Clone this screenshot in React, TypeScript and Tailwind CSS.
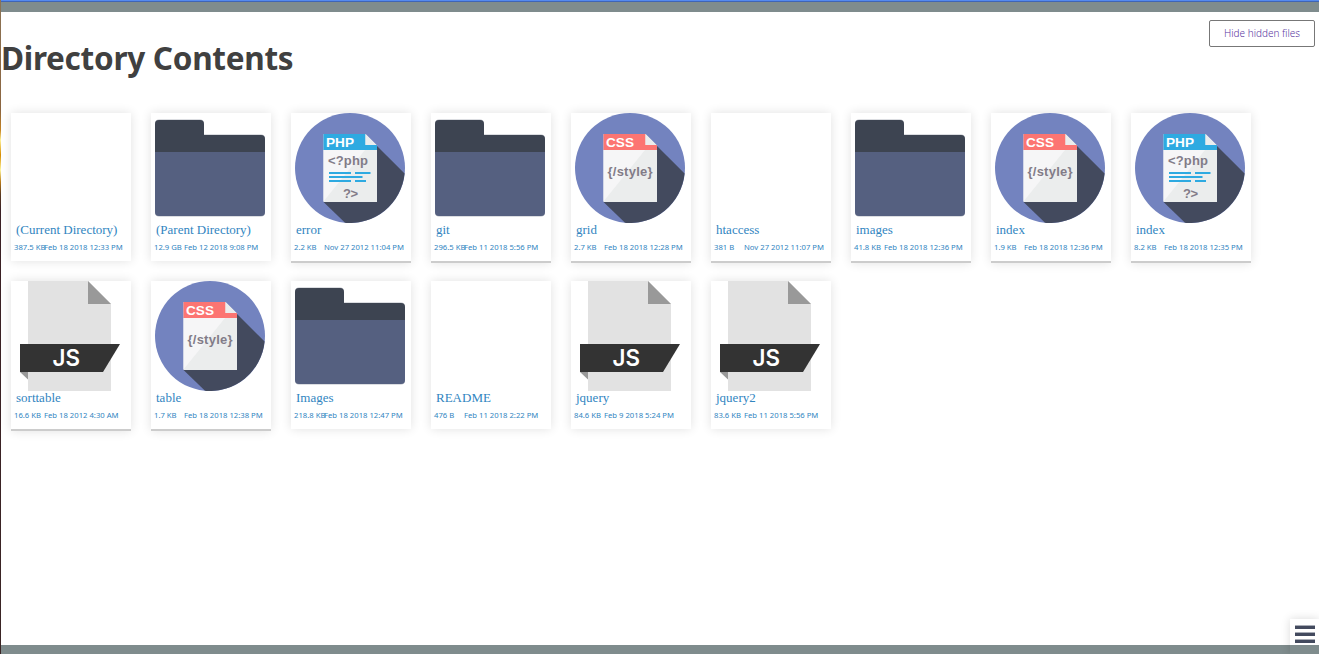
import type { ReactNode } from 'react';

type Kind = 'blank' | 'folder' | 'php' | 'css' | 'js';

interface Entry {
  name: string;
  size: string;
  date: string;
  kind: Kind;
  lined: boolean;
}

const e = (name: string, size: string, date: string, kind: Kind, lined: boolean): Entry => ({
  name, size, date, kind, lined,
});

const entries: Entry[] = [
  e('(Current Directory)', '387.5 KB', 'Feb 18 2018 12:33 PM', 'blank', false),
  e('(Parent Directory)', '12.9 GB', 'Feb 12 2018 9:08 PM', 'folder', false),
  e('error', '2.2 KB', 'Nov 27 2012 11:04 PM', 'php', true),
  e('git', '296.5 KB', 'Feb 11 2018 5:56 PM', 'folder', true),
  e('grid', '2.7 KB', 'Feb 18 2018 12:28 PM', 'css', true),
  e('htaccess', '381 B', 'Nov 27 2012 11:07 PM', 'blank', true),
  e('images', '41.8 KB', 'Feb 18 2018 12:36 PM', 'folder', true),
  e('index', '1.9 KB', 'Feb 18 2018 12:36 PM', 'css', true),
  e('index', '8.2 KB', 'Feb 18 2018 12:35 PM', 'php', true),
  e('sorttable', '16.6 KB', 'Feb 18 2012 4:30 AM', 'js', true),
  e('table', '1.7 KB', 'Feb 18 2018 12:38 PM', 'css', true),
  e('Images', '218.8 KB', 'Feb 18 2018 12:47 PM', 'folder', false),
  e('README', '476 B', 'Feb 11 2018 2:22 PM', 'blank', false),
  e('jquery', '84.6 KB', 'Feb 9 2018 5:24 PM', 'js', false),
  e('jquery2', '83.6 KB', 'Feb 11 2018 5:56 PM', 'js', false),
];

function Icon({ children }: { children?: ReactNode }) {
  return (
    <svg className="ml-1 block h-[110px] w-[110px]" viewBox="0 0 110 110" fontFamily="'Liberation Sans', Arial, sans-serif" fontWeight="bold">
      {children}
    </svg>
  );
}

function FolderIcon() {
  return (
    <Icon>
      <path d="M0 10.500a4 4 0 0 1 4-4h41a4 4 0 0 1 4 4v11h57a4 4 0 0 1 4 4V99.500a4 4 0 0 1-4 4H4a4 4 0 0 1-4-4z" fill="#b8bcc4" />
      <path d="M0 11a4 4 0 0 1 4-4h41a4 4 0 0 1 4 4v11h57a4 4 0 0 1 4 4v20H0z" fill="#3d4451" />
      <path d="M0 39h110v60a4 4 0 0 1-4 4H4a4 4 0 0 1-4-4z" fill="#556080" />
    </Icon>
  );
}

function RoundIcon({ accent, label, children }: { accent: string; label: string; children: ReactNode }) {
  return (
    <Icon>
      <circle cx="55" cy="55" r="55" fill="#7383bf" />
      <path d="M82 33L109.600 60.600A55 55 0 0 1 50 109.800L28.500 89z" fill="#434a5e" />
      <path d="M28.500 21H70.500L82 32.500V89H28.500z" fill="#ebeded" />
      <path d="M28.500 37H70L28.500 88.500z" fill="#f6f6f7" />
      <path d="M28.500 21H70.500V32H82V37H28.500z" fill={accent} />
      <path d="M70.500 21L81.500 32H70.500z" fill="#ebeded" />
      <text x="31" y="34" fontSize="13.600" fill="#fff" textLength="28">{label}</text>
      {children}
    </Icon>
  );
}

function PhpIcon() {
  return (
    <RoundIcon accent="#2eaae1" label="PHP">
      <text x="33" y="52" fontSize="13" fill="#827c88" textLength="40">&lt;?php</text>
      <path d="M34 60H56M60 60H75.500M34 64H67.500M34 68H56M60 68H71" stroke="#2eaae1" strokeWidth="2.200" />
      <text x="48" y="84.500" fontSize="13" fill="#827c88" textLength="15">?&gt;</text>
    </RoundIcon>
  );
}

function CssIcon() {
  return (
    <RoundIcon accent="#fc7572" label="CSS">
      <text x="32.500" y="63" fontSize="13" fill="#827c88" textLength="45">{'{/style}'}</text>
    </RoundIcon>
  );
}

function JsIcon() {
  return (
    <Icon>
      <path d="M13 0H73L96 23V110H13z" fill="#e2e2e2" />
      <path d="M73 0L96 23H73z" fill="#999" />
      <path d="M5 91H13V98.500z" fill="#999" />
      <path d="M5 63H105L88 91H5z" fill="#333" />
      <text x="37.500" y="85" fontSize="22.500" fontWeight="600" fontFamily="Inter, 'Liberation Sans', sans-serif" fill="#fff" textLength="27.500" lengthAdjust="spacingAndGlyphs">JS</text>
    </Icon>
  );
}

const icons: Record<Kind, () => ReactNode> = {
  blank: () => <Icon />,
  folder: FolderIcon,
  php: PhpIcon,
  css: CssIcon,
  js: JsIcon,
};

function Card({ entry }: { entry: Entry }) {
  const Glyph = icons[entry.kind];
  return (
    <a className={`block w-[120px] bg-white text-[#3185bf] shadow-[0_0_10px_rgba(0,0,0,0.12)] ${entry.lined ? 'h-[150px] border-b-2 border-[#ccc]' : 'h-[148px]'}`}>
      <Glyph />
      <div className="h-[16px] pl-[5px] font-['Liberation_Serif',serif] text-[13px] leading-[14px] whitespace-nowrap">{entry.name}</div>
      <div className="flex h-[16px] pl-[3px] font-['Noto_Sans',sans-serif] text-[7.700px] leading-[16px] whitespace-nowrap">
        <span className="w-[30px] shrink-0">{entry.size}</span>
        <span>{entry.date}</span>
      </div>
    </a>
  );
}

export default function App() {
  return (
    <div className="relative flex h-[654px] w-[1319px] flex-col overflow-hidden bg-white">
      <div className="h-[2px] shrink-0 border-b border-[#3f65b5] bg-[#558aef]" />
      <div className="h-[10px] shrink-0 bg-[#7f8c8d]" />
      <div className="flex h-[101px] shrink-0 items-start justify-between pl-px pr-1">
        <h1 className="mt-[23px] font-['Noto_Sans',sans-serif] text-[31.500px] leading-[46px] font-bold tracking-[-0.280px] whitespace-nowrap text-[#404040]">Directory Contents</h1>
        <button className="mt-2 h-[27px] w-[106px] rounded-[2px] border border-[#777] font-['Noto_Sans',sans-serif] text-[10px] font-light whitespace-nowrap text-[#5a359f]">Hide hidden files</button>
      </div>
      <main className="grid flex-1 auto-rows-[150px] grid-cols-[repeat(9,120px)] content-start gap-x-5 gap-y-[18px] pl-[11px]">
        {entries.map((entry, i) => (
          <Card key={i} entry={entry} />
        ))}
      </main>
      <div className="h-[9px] shrink-0 bg-[#7f8c8d]" />
      <div className="absolute top-0 left-0 h-full w-px bg-[linear-gradient(#8b7355_0px,#8b6540_110px,#c58320_130px,#fff29a_140px,#d58b00_155px,#fff6a0_170px,#b87a18_182px,#5b3a20_194px,#3a2024_210px,#3a2525_654px)]" />
      <button className="absolute right-0 bottom-0 block h-[35px] w-[29px] bg-white shadow-[0_0_10px_rgba(0,0,0,0.15)]" aria-label="Menu">
        <span className="flex h-[26px] flex-col gap-[3px] pt-[6px] pl-[5px]">
          <span className="h-1 w-5 shrink-0 border-t border-[#a9adb7] bg-[#434a5e]" />
          <span className="h-1 w-5 shrink-0 border-t border-[#a9adb7] bg-[#434a5e]" />
          <span className="h-1 w-5 shrink-0 border-t border-[#a9adb7] bg-[#434a5e]" />
        </span>
        <span className="block h-[9px] bg-[#7f8c8d]" />
      </button>
    </div>
  );
}
